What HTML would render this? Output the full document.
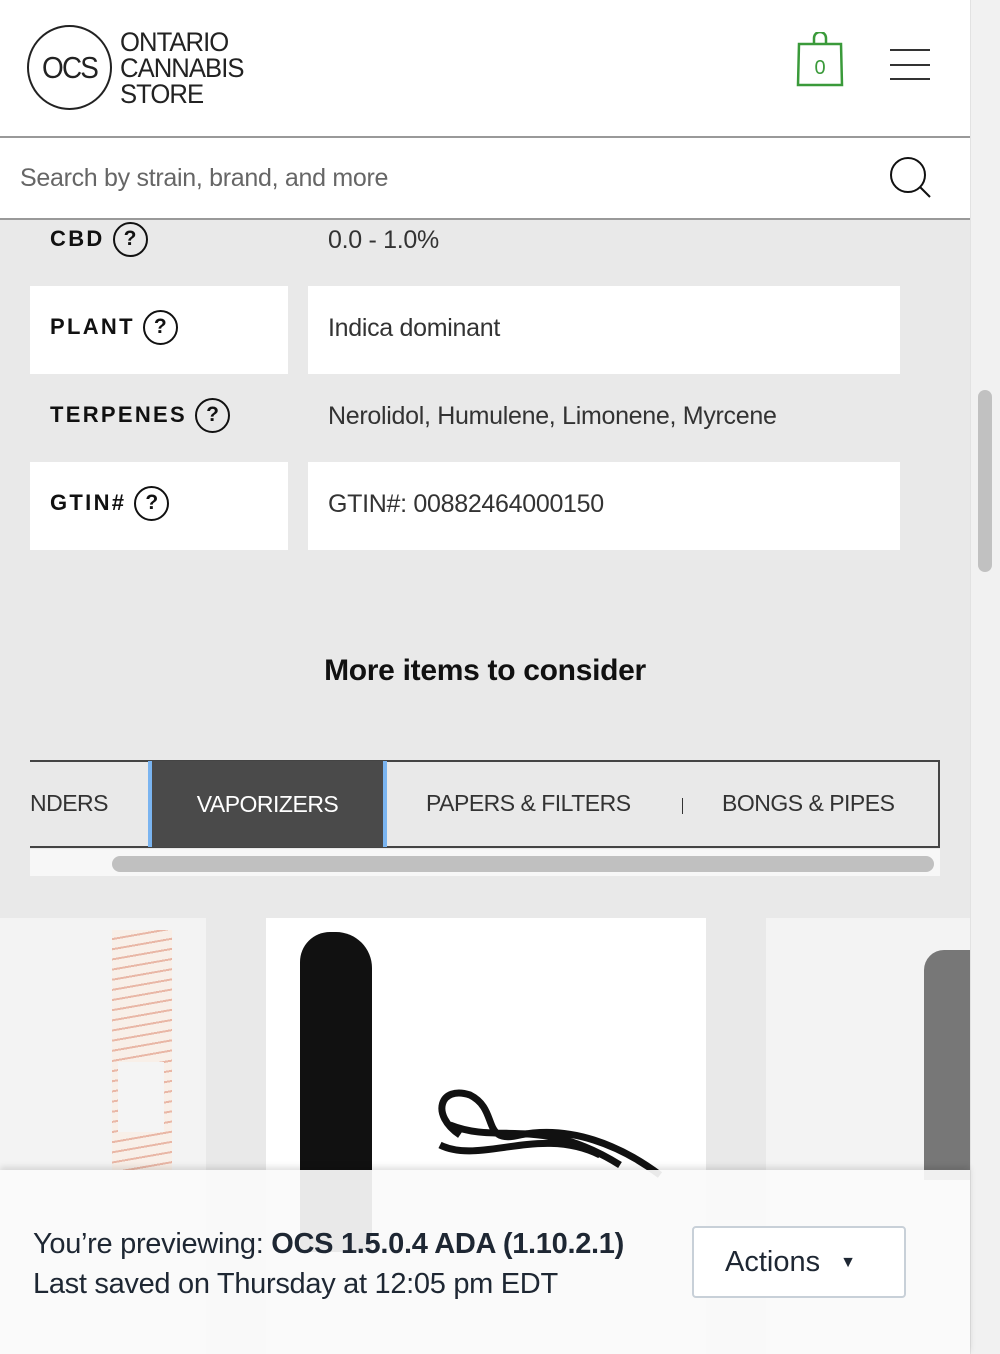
<!DOCTYPE html>
<html><head><meta charset="utf-8"><style>
*{margin:0;padding:0;box-sizing:border-box}
body{width:1000px;height:1354px;position:relative;overflow:hidden;background:#e9e9e9;font-family:"Liberation Sans",sans-serif;color:#222}
.a{position:absolute}
.lbl{font-weight:bold;font-size:22px;letter-spacing:2.3px;color:#111;display:flex;align-items:center}
.q{display:inline-block;width:35px;height:35px;border:2.5px solid #111;border-radius:50%;text-align:center;line-height:30px;font-size:21px;font-weight:bold;letter-spacing:0;margin-left:8px}
.val{font-size:25px;color:#333;letter-spacing:-0.3px}
.wb{background:#fff}
.tab{font-size:23px;color:#333;top:760px;height:87px;line-height:87px;letter-spacing:-0.5px}
</style></head><body>
<div class="a wb" style="left:0;top:0;width:970px;height:136px"></div>
<div class="a" style="left:27px;top:25px;width:85px;height:85px;border:2px solid #222;border-radius:50%;font-size:31px;line-height:81px;text-align:center;color:#222;letter-spacing:-2px"><span style="display:inline-block;transform:scaleX(0.9)">OCS</span></div>
<div class="a" style="left:120px;top:29px;font-size:27px;line-height:26px;color:#222;letter-spacing:-1px;transform:scaleX(0.95);transform-origin:left">ONTARIO<br>CANNABIS<br>STORE</div>
<svg class="a" style="left:796px;top:32px" width="48" height="56" viewBox="0 0 48 56"><path d="M18 12 V6 a6 6 0 0 1 12 0 V12" fill="none" stroke="#3a9a3a" stroke-width="2.5"/><path d="M3 12 H45 L46 53 H2 Z" fill="none" stroke="#3a9a3a" stroke-width="2.5"/><text x="24" y="42" text-anchor="middle" font-family="Liberation Sans" font-size="20" fill="#3a9a3a">0</text></svg>
<div class="a" style="left:890px;top:49px;width:40px;height:2px;background:#333"></div>
<div class="a" style="left:890px;top:64px;width:40px;height:2px;background:#333"></div>
<div class="a" style="left:890px;top:78px;width:40px;height:2px;background:#333"></div>
<div class="a" style="left:0;top:136px;width:970px;height:2px;background:#999"></div>
<div class="a wb" style="left:0;top:138px;width:970px;height:80px"></div>
<div class="a" style="left:20px;top:164px;font-size:25px;color:#666;letter-spacing:-0.3px">Search by strain, brand, and more</div>
<svg class="a" style="left:888px;top:155px" width="46" height="46" viewBox="0 0 46 46"><circle cx="20" cy="20" r="17" fill="none" stroke="#111" stroke-width="2"/><path d="M32 32 L42 42" stroke="#111" stroke-width="2"/></svg>
<div class="a" style="left:0;top:218px;width:970px;height:2px;background:#999"></div>
<div class="a" style="left:970px;top:0;width:30px;height:1354px;background:#f1f1f1;border-left:1px solid #e2e2e2"></div>
<div class="a" style="left:978px;top:390px;width:14px;height:182px;background:#c1c1c1;border-radius:7px"></div>
<div class="a lbl" style="left:50px;top:220px;height:38px">CBD<span class="q">?</span></div>
<div class="a val" style="left:328px;top:226px">0.0 - 1.0%</div>
<div class="a wb" style="left:30px;top:286px;width:258px;height:88px"></div>
<div class="a wb" style="left:308px;top:286px;width:592px;height:88px"></div>
<div class="a lbl" style="left:50px;top:308px;height:38px">PLANT<span class="q">?</span></div>
<div class="a val" style="left:328px;top:314px">Indica dominant</div>
<div class="a lbl" style="left:50px;top:396px;height:38px">TERPENES<span class="q">?</span></div>
<div class="a val" style="left:328px;top:402px">Nerolidol, Humulene, Limonene, Myrcene</div>
<div class="a wb" style="left:30px;top:462px;width:258px;height:88px"></div>
<div class="a wb" style="left:308px;top:462px;width:592px;height:88px"></div>
<div class="a lbl" style="left:50px;top:484px;height:38px">GTIN#<span class="q">?</span></div>
<div class="a val" style="left:328px;top:490px">GTIN#: 00882464000150</div>
<div class="a" style="left:0;top:654px;width:970px;text-align:center;font-size:30px;font-weight:bold;color:#111;letter-spacing:-0.3px">More items to consider</div>
<div class="a" style="left:30px;top:760px;width:910px;height:88px;border-top:2px solid #444;border-bottom:2px solid #444;border-right:2px solid #444"></div>
<div class="a tab" style="left:30px">NDERS</div>
<div class="a" style="left:148px;top:761px;width:239px;height:86px;background:#4a4a4a;border-left:4px solid #7ab4f0;border-right:4px solid #7ab4f0;color:#fff;font-size:23px;letter-spacing:-0.5px;text-align:center;line-height:86px">VAPORIZERS</div>
<div class="a tab" style="left:426px">PAPERS &amp; FILTERS</div>
<div class="a" style="left:682px;top:798px;width:1px;height:16px;background:#333"></div>
<div class="a tab" style="left:722px">BONGS &amp; PIPES</div>
<div class="a" style="left:30px;top:849px;width:910px;height:27px;background:#f7f7f7"></div>
<div class="a" style="left:112px;top:856px;width:822px;height:16px;background:#c0c0c0;border-radius:8px"></div>
<div class="a" style="left:0;top:918px;width:206px;height:436px;background:#f3f3f3"></div>
<div class="a" style="left:112px;top:930px;width:60px;height:240px;background:repeating-linear-gradient(170deg,#f8efe8 0 8px,#e9b7a6 8px 10px)"></div>
<div class="a" style="left:118px;top:1062px;width:46px;height:70px;background:#f4f4f4"></div>
<div class="a wb" style="left:266px;top:918px;width:440px;height:436px"></div>
<div class="a" style="left:300px;top:932px;width:72px;height:320px;background:#111;border-radius:30px 36px 0 0"></div>
<svg class="a" style="left:420px;top:1085px" width="250" height="100" viewBox="0 0 250 100"><path d="M40 50 C10 30 20 0 50 10 C80 25 60 60 100 50 C150 40 200 60 240 90 M20 60 C60 80 120 40 180 70 M30 40 C80 60 120 30 200 80" fill="none" stroke="#111" stroke-width="7"/></svg>
<div class="a" style="left:766px;top:918px;width:204px;height:436px;background:#f3f3f3"></div>
<div class="a" style="left:924px;top:950px;width:46px;height:230px;background:#777;border-radius:20px 0 0 0"></div>
<div class="a" style="left:0;top:1170px;width:970px;height:184px;background:rgba(250,250,250,0.93);box-shadow:0 -3px 6px rgba(0,0,0,0.12)"></div>
<div class="a" style="left:33px;top:1224px;font-size:29px;line-height:40px;color:#1e2733;letter-spacing:-0.3px">You’re previewing: <b>OCS 1.5.0.4 ADA (1.10.2.1)</b><br>Last saved on Thursday at 12:05 pm EDT</div>
<div class="a" style="left:692px;top:1226px;width:214px;height:72px;border:2px solid #c8d0d8;border-radius:4px;background:#fff;font-size:29px;color:#1e2733;line-height:68px;padding-left:31px">Actions <span style="font-size:16px;position:relative;top:-4px;margin-left:12px">▼</span></div>
</body></html>
